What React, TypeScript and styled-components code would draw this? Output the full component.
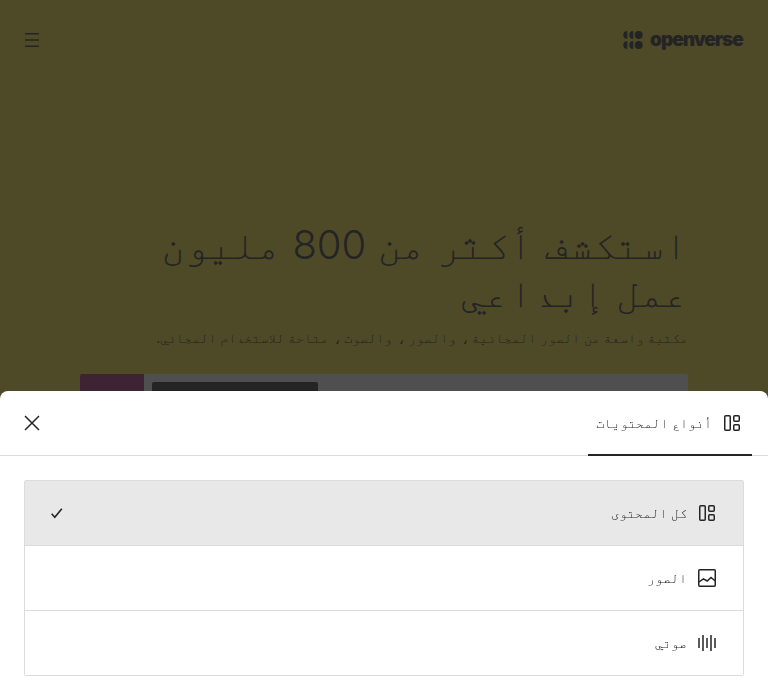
import React from "react";
import styled, { createGlobalStyle } from "styled-components";

const Global = createGlobalStyle`
  *, *::before, *::after { box-sizing: border-box; }
  body { margin: 0; overflow: hidden; background: #4e4a28; }
  h1, p { margin: 0; }
  button { font: inherit; color: inherit; border: 0; background: none; padding: 0; }
`;

const Page = styled.div`
  direction: rtl;
  width: 768px;
  height: 700px;
  display: flex;
  flex-direction: column;
  font-family: Inter, FreeMono, "DejaVu Sans Mono", monospace;
  -webkit-font-smoothing: antialiased;
  color: #242424;
  overflow: hidden;
`;

const Backdrop = styled.main`
  height: 391px;
  flex: none;
  display: flow-root;
  background: #4e4a28;
`;

const TopBar = styled.header`
  height: 80px;
  display: flex;
  align-items: center;
  justify-content: space-between;
  padding: 0 26px 0 25px;
`;

const Brand = styled.div`
  direction: ltr;
  display: flex;
  align-items: center;
  gap: 7px;
  svg { display: block; }
`;

const BrandName = styled.span`
  width: 92px;
  font: 900 19px/20px Inter, sans-serif;
  letter-spacing: -1px;
`;

const MenuButton = styled.button`
  width: 14px;
  height: 14px;
  svg { display: block; }
`;

const Hero = styled.section`
  padding: 141px 80px 0;
`;

const Title = styled.h1`
  font-size: 40px;
  line-height: 48px;
  font-weight: 300;
`;

const Subtitle = styled.p`
  margin-top: 11px;
  font-size: 13.42px;
  line-height: 21px;
`;

const SearchBar = styled.div`
  margin-top: 25px;
  height: 17px;
  display: flex;
  overflow: hidden;
  background: #4f4f4f;
  border-radius: 2px 2px 0 0;
`;

const SearchField = styled.div`
  flex: 1;
`;

const TypeButton = styled.div`
  width: 166px;
  margin: 8px 0 0 8px;
  background: #242424;
  border-radius: 2px 2px 0 0;
`;

const SearchButton = styled.div`
  width: 64px;
  background: #3e2335;
`;

const SheetArea = styled.div`
  flex: 1;
  background: #4e4a28;
`;

const Sheet = styled.section`
  height: 100%;
  background: #fff;
  border-radius: 8px 8px 0 0;
  will-change: transform;
`;

const SheetHeader = styled.header`
  height: 65px;
  display: flex;
  justify-content: space-between;
  padding: 0 16px;
  border-bottom: 1px solid #dcdcdc;
`;

const Tab = styled.div`
  height: 65px;
  display: flex;
  align-items: center;
  gap: 8px;
  padding: 0 8px;
  border-bottom: 2px solid #242424;
`;

const Label = styled.span`
  font-size: 13.33px;
  line-height: 20px;
  white-space: nowrap;
`;

const IconBox = styled.span`
  width: 24px;
  height: 24px;
  flex: none;
  svg { display: block; }
`;

const CloseButton = styled.button`
  width: 32px;
  height: 64px;
  display: grid;
  place-items: center;
`;

const Options = styled.div`
  margin: 24px 24px 0;
  border: 1px solid #dcdcdc;
  border-radius: 2px;
`;

const Option = styled.div<{ $selected?: boolean }>`
  height: 65px;
  display: flex;
  align-items: center;
  gap: 8px;
  padding: 0 24px;
  background: ${(p) => (p.$selected ? "#e8e8e8" : "#fff")};
  border-bottom: 1px solid #dcdcdc;
  &:last-child { height: 64px; border-bottom: 0; }
`;

const Check = styled.span`
  margin-right: auto;
  width: 16px;
  height: 16px;
  svg { display: block; }
`;

const Logo = () => (
  <svg width="20" height="18" viewBox="0 0 20 18" fill="#242424">
    <circle cx="15.7" cy="4" r="4" />
    <circle cx="15.7" cy="14" r="4" />
    <path d="M4.3 0a4 4 0 0 0 0 8zM4.3 10a4 4 0 0 0 0 8zM10.2 0a4 4 0 0 0 0 8zM10.2 10a4 4 0 0 0 0 8z" />
  </svg>
);

const AllIcon = () => (
  <svg width="24" height="24" viewBox="0 0 24 24" fill="none" stroke="#242424" strokeWidth="1.5">
    <rect x="4.75" y="4.75" width="5.5" height="14.5" rx="1" />
    <rect x="13.75" y="4.75" width="5.5" height="5.5" rx="1" />
    <rect x="13.75" y="13.75" width="5.5" height="5.5" rx="1" />
  </svg>
);

const ImageIcon = () => (
  <svg width="24" height="24" viewBox="0 0 24 24" fill="none" stroke="#242424" strokeWidth="1.5">
    <rect x="3.75" y="3.75" width="16.5" height="16.5" rx="1" />
    <path d="M4 16l4.4-3.2 3.8 2.2 3.8-3.6 4 3.4" />
  </svg>
);

const AudioIcon = () => (
  <svg width="24" height="24" viewBox="0 0 24 24" fill="none" stroke="#242424" strokeWidth="1.5">
    <path d="M4 7v10M8 4v16M12 7v10M16 4v16M20 7v10" />
  </svg>
);

export default function App() {
  return (
    <Page>
      <Global />
      <Backdrop>
        <TopBar>
          <Brand><Logo /><BrandName>openverse</BrandName></Brand>
          <MenuButton aria-label="القائمة">
            <svg width="14" height="14" viewBox="0 0 14 14" stroke="#242424" strokeWidth="1.5">
              <path d="M0 .75h14M0 7h14M0 13.25h14" />
            </svg>
          </MenuButton>
        </TopBar>
        <Hero>
          <Title>استكشف أكثر من 800 مليون عمل إبداعي</Title>
          <Subtitle>مكتبة واسعة من الصور المجانية ، والصور ، والصوت ، متاحة للاستخدام المجاني.</Subtitle>
          <SearchBar><SearchField /><TypeButton /><SearchButton /></SearchBar>
        </Hero>
      </Backdrop>
      <SheetArea>
        <Sheet>
          <SheetHeader>
            <Tab><IconBox><AllIcon /></IconBox><Label>أنواع المحتويات</Label></Tab>
            <CloseButton aria-label="إغلاق">
              <svg width="16" height="16" viewBox="0 0 16 16" stroke="#242424" strokeWidth="1.5">
                <path d="M1 1l14 14M15 1L1 15" />
              </svg>
            </CloseButton>
          </SheetHeader>
          <Options>
            <Option $selected>
              <IconBox><AllIcon /></IconBox><Label>كل المحتوى</Label>
              <Check>
                <svg width="16" height="16" viewBox="0 0 16 16" fill="none" stroke="#242424" strokeWidth="1.6">
                  <path d="M2.7 8.7l3.1 3.5 7-8.5" />
                </svg>
              </Check>
            </Option>
            <Option><IconBox><ImageIcon /></IconBox><Label>الصور</Label></Option>
            <Option><IconBox><AudioIcon /></IconBox><Label>صوتي</Label></Option>
          </Options>
        </Sheet>
      </SheetArea>
    </Page>
  );
}
